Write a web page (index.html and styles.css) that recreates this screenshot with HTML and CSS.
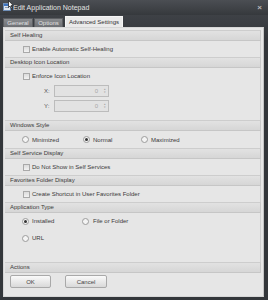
FILE: index.html
```html
<!DOCTYPE html>
<html lang="en">
<head>
  <meta charset="UTF-8" />
  <title>Edit Application Notepad</title>
  <link rel="stylesheet" href="styles.css">
</head>
<body>
  <div class="window">
    <!-- 타이틀 바 -->
    <div class="titlebar">
      <svg class="app-icon" width="8" height="8" viewBox="0 0 8 8">
        <rect x="0.5" y="0.5" width="7" height="7" fill="#dfe6ef" stroke="#6f8fb8"/>
        <rect x="1" y="1" width="6" height="2" fill="#3f74c0"/>
        <rect x="2" y="4" width="4" height="1" fill="#8a9bb0"/>
      </svg>
      <span class="title">Edit Application Notepad</span>
      <span class="close">&#215;</span>
    </div>

    <div class="tabs">
      <div class="tab">General</div>
      <div class="tab">Options</div>
      <div class="tab active">Advanced Settings</div>
    </div>

    <div class="panel">
      <div class="section">
        <div class="section-head">Self Healing</div>
        <div class="section-body sh">
          <label class="check"><span class="box"></span>Enable Automatic Self-Healing</label>
        </div>
      </div>

      <div class="section">
        <div class="section-head">Desktop Icon Location</div>
        <div class="section-body desktop">
          <label class="check"><span class="box"></span>Enforce Icon Location</label>
          <div class="coord">
            <span class="coord-label">X:</span>
            <div class="spin"><span class="spin-val">0</span><span class="arrows">&#9652;<br>&#9662;</span></div>
          </div>
          <div class="coord">
            <span class="coord-label">Y:</span>
            <div class="spin"><span class="spin-val">0</span><span class="arrows">&#9652;<br>&#9662;</span></div>
          </div>
        </div>
      </div>

      <div class="section">
        <div class="section-head">Windows Style</div>
        <div class="section-body radios">
          <label class="radio"><span class="dot"></span>Minimized</label>
          <label class="radio"><span class="dot on"></span>Normal</label>
          <label class="radio"><span class="dot"></span>Maximized</label>
        </div>
      </div>

      <div class="section">
        <div class="section-head">Self Service Display</div>
        <div class="section-body sh">
          <label class="check"><span class="box"></span>Do Not Show in Self Services</label>
        </div>
      </div>

      <div class="section">
        <div class="section-head">Favorites Folder Display</div>
        <div class="section-body sh">
          <label class="check"><span class="box"></span>Create Shortcut in User Favorites Folder</label>
        </div>
      </div>

      <div class="section">
        <div class="section-head">Application Type</div>
        <div class="section-body apptype">
          <label class="radio"><span class="dot on"></span>Installed</label>
          <label class="radio"><span class="dot"></span>File or Folder</label>
          <label class="radio"><span class="dot"></span>URL</label>
        </div>
      </div>

      <div class="section">
        <div class="section-head">Actions</div>
        <div class="section-body actions">
          <button class="btn ok">OK</button>
          <button class="btn cancel">Cancel</button>
        </div>
      </div>
    </div>
  </div>

  <!-- 마우스 커서 -->
  <svg class="cursor" width="6" height="9" viewBox="0 0 6 9">
    <path d="M0.5 0.5 L0.5 7.5 L2 6 L3.2 8.5 L4.2 8 L3.1 5.6 L5.3 5.6 Z" fill="#fff" stroke="#111" stroke-width="0.7"/>
  </svg>
</body>
</html>
```
FILE: styles.css
```css
html, body {
  margin: 0;
  padding: 0;
  width: 268px;
  height: 300px;
  overflow: hidden;
  background: #2c2e32;
  font-family: "Liberation Sans", Arial, sans-serif;
  font-size: 6px;
  color: #3a3a3a;
  position: relative;
}

.window {
  display: flex;
  flex-direction: column;
  height: 300px;
  background: linear-gradient(#45484d, #33363a 40px);
}

.titlebar {
  height: 15px;
  display: flex;
  align-items: center;
  padding-left: 3px;
  padding-right: 6px;
  background: linear-gradient(#4b4e53, #36393d);
}

.app-icon {
  margin-top: -1px;
}

.title {
  margin-left: 2px;
  font-size: 7px;
  color: #e4e4e4;
  flex: 1;
}

.close {
  color: #b8b8b8;
  font-size: 8px;
  font-weight: bold;
}

.tabs {
  height: 12px;
  display: flex;
  align-items: flex-end;
  padding-left: 3px;
  gap: 1px;
}

.tab {
  box-sizing: border-box;
  height: 9px;
  padding: 0;
  font-size: 6px;
  line-height: 8px;
  text-align: center;
  white-space: nowrap;
  color: #e2e2e2;
  background: linear-gradient(#8a8c8f, #6e7074);
  border: 1px solid #5c5e62;
  border-bottom: none;
}

.tab:nth-child(1) { width: 30px; }
.tab:nth-child(2) { width: 29px; }

.tab.active {
  height: 11px;
  line-height: 10px;
  width: 58px;
  margin-left: 1px;
  color: #333;
  background: #eaeaea;
  border-color: #f6f6f6;
}

.panel {
  margin: 0 4px 3px 3px;
  flex: 1;
  background: #e6e6e6;
  border: 1px solid #d6d6d6;
  border-right-color: #c4c4c4;
  padding: 2px 2px 0 1px;
  display: flex;
  flex-direction: column;
}

.section-head {
  height: 9px;
  line-height: 9px;
  padding-left: 5px;
  color: #3a3a3a;
  background: linear-gradient(#e2e2e2, #d6d6d6);
  border-top: 1px solid #cdcdcd;
  border-bottom: 1px solid #c6c6c6;
  border-right: 1px solid #c8c8c8;
}

.section-body {
  padding-left: 17px;
  border-right: 1px solid #cfcfcf;
}

.sh {
  height: 16px;
  display: flex;
  align-items: center;
}

.check, .radio {
  display: flex;
  align-items: center;
  white-space: nowrap;
}

.box {
  width: 5px;
  height: 5px;
  margin-left: 1px;
  margin-right: 2px;
  border: 1px solid #a9a9a9;
  background: linear-gradient(#dcdcdc, #f2f2f2);
}

.dot {
  width: 5px;
  height: 5px;
  margin-right: 3px;
  border: 1px solid #9c9c9c;
  border-radius: 50%;
  background: #f4f4f4;
  position: relative;
}

.dot.on::after {
  content: "";
  position: absolute;
  left: 1px;
  top: 1px;
  width: 3px;
  height: 3px;
  border-radius: 50%;
  background: #333;
}

.desktop {
  height: 52px;
  padding-top: 1px;
  box-sizing: border-box;
}

.desktop .check {
  height: 14px;
}

.coord {
  display: flex;
  align-items: center;
  height: 12px;
  margin-top: 2px;
  padding-left: 22px;
}

.coord + .coord {
  margin-top: 3px;
}

.coord-label {
  width: 10px;
  color: #555;
}

.spin {
  width: 53px;
  height: 10px;
  border: 1px solid #bcbcbc;
  background: #e2e2e2;
  display: flex;
  align-items: center;
  justify-content: flex-end;
  color: #a8a8a8;
}

.spin-val {
  margin-right: 4px;
}

.arrows {
  font-size: 3px;
  line-height: 3px;
  width: 6px;
  text-align: center;
  color: #a0a0a0;
}

.radios {
  height: 17px;
  display: grid;
  grid-template-columns: 61px 58px auto;
  align-items: center;
}

.apptype {
  height: 49px;
  display: grid;
  grid-template-columns: 60px auto;
  grid-template-rows: 14px 14px;
  row-gap: 3px;
  align-items: center;
  padding-top: 1px;
  box-sizing: border-box;
}

.apptype .radio:nth-child(2) .dot {
  margin-right: 4px;
}

.actions {
  flex: 1;
  padding-left: 5px;
  padding-top: 2px;
  display: flex;
  align-items: flex-start;
  gap: 14px;
  border-right: none;
}

.btn {
  height: 13px;
  padding: 0;
  font-family: "Liberation Sans", Arial, sans-serif;
  font-size: 6px;
  color: #444;
  border: 1px solid #a9a9a9;
  border-radius: 2px;
  background: linear-gradient(#fafafa, #d9d9d9);
}

.ok { width: 41px; }
.cancel { width: 42px; }

.cursor {
  position: absolute;
  left: 8px;
  top: 0;
}
```
